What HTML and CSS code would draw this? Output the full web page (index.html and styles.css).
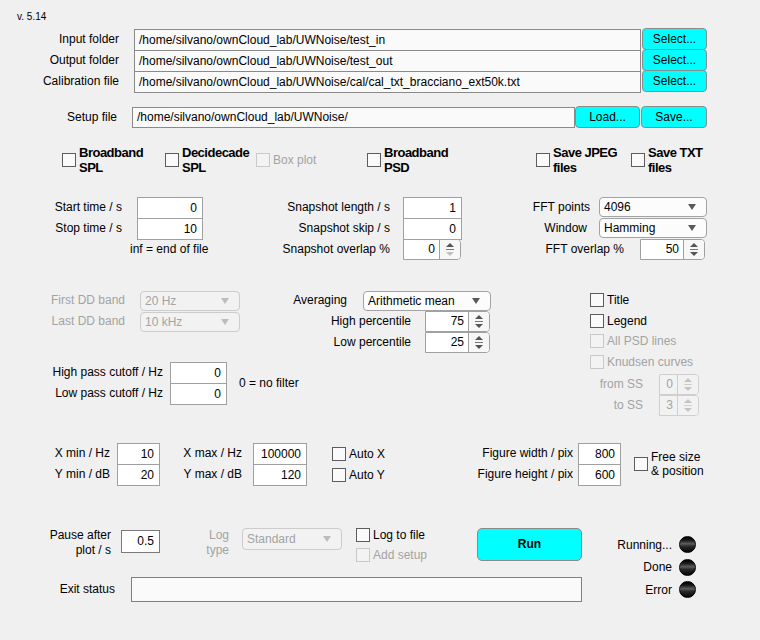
FILE: index.html
```html
<!DOCTYPE html>
<html>
<head>
<meta charset="utf-8">
<title>UWNoise</title>
<link rel="stylesheet" href="styles.css">
</head>
<body>
<div class="app">
  <div class="version">v. 5.14</div>

  <div class="paths">
    <div class="plabel">Input folder</div>
    <div class="path">/home/silvano/ownCloud_lab/UWNoise/test_in</div>
    <div class="bcell"><div class="btn">Select...</div></div>
    <div class="plabel">Output folder</div>
    <div class="path">/home/silvano/ownCloud_lab/UWNoise/test_out</div>
    <div class="bcell"><div class="btn">Select...</div></div>
    <div class="plabel">Calibration file</div>
    <div class="path">/home/silvano/ownCloud_lab/UWNoise/cal/cal_txt_bracciano_ext50k.txt</div>
    <div class="bcell"><div class="btn">Select...</div></div>
  </div>

  <div class="setup">
    <div class="slabel">Setup file</div>
    <div class="path spath">/home/silvano/ownCloud_lab/UWNoise/</div>
    <div class="btn load">Load...</div>
    <div class="btn save">Save...</div>
  </div>

  <div class="checks">
    <div class="chk c1"><span class="cb"></span><span class="blabel">Broadband<br>SPL</span></div>
    <div class="chk c2"><span class="cb"></span><span class="blabel">Decidecade<br>SPL</span></div>
    <div class="chk c3 dis"><span class="cb"></span><span>Box plot</span></div>
    <div class="chk c4"><span class="cb"></span><span class="blabel">Broadband<br>PSD</span></div>
    <div class="chk c5"><span class="cb"></span><span class="blabel">Save JPEG<br>files</span></div>
    <div class="chk c6"><span class="cb"></span><span class="blabel">Save TXT<br>files</span></div>
  </div>

  <div class="time">
    <div class="grp ta">
      <div class="row"><div class="lbl la">Start time / s</div><div class="num wa">0</div></div>
      <div class="row"><div class="lbl la">Stop time / s</div><div class="num wa">10</div></div>
      <div class="row"><div class="note inf">inf = end of file</div></div>
    </div>
    <div class="grp tb">
      <div class="row"><div class="lbl lb">Snapshot length / s</div><div class="num wb">1</div></div>
      <div class="row"><div class="lbl lb">Snapshot skip / s</div><div class="num wb">0</div></div>
      <div class="row"><div class="lbl lb">Snapshot overlap %</div>
        <div class="spin wbs"><span class="v">0</span><span class="ar"><i class="up"></i><i class="ln"></i><i class="dn off"></i></span></div>
      </div>
    </div>
    <div class="grp tc">
      <div class="row"><div class="lbl lc">FFT points</div><div class="dd wc"><span>4096</span></div></div>
      <div class="row"><div class="lbl lc lwin">Window</div><div class="dd wc"><span>Hamming</span></div></div>
      <div class="row"><div class="lbl lc3">FFT overlap %</div>
        <div class="spin wcs"><span class="v">50</span><span class="ar"><i class="up"></i><i class="ln"></i><i class="dn"></i></span></div>
      </div>
    </div>
  </div>

  <div class="mid">
    <div class="mleft">
      <div class="mtop">
        <div class="grp mda">
          <div class="row"><div class="lbl ldd dis">First DD band</div><div class="dd dis wdd"><span>20 Hz</span></div></div>
          <div class="row"><div class="lbl ldd dis">Last DD band</div><div class="dd dis wdd"><span>10 kHz</span></div></div>
        </div>
        <div class="grp mdb">
          <div class="row"><div class="lbl lavg">Averaging</div><div class="dd wavg"><span>Arithmetic mean</span></div></div>
          <div class="row"><div class="lbl lpct">High percentile</div>
            <div class="spin wpct"><span class="v">75</span><span class="ar"><i class="up"></i><i class="ln"></i><i class="dn"></i></span></div>
          </div>
          <div class="row"><div class="lbl lpct">Low percentile</div>
            <div class="spin wpct"><span class="v">25</span><span class="ar"><i class="up"></i><i class="ln"></i><i class="dn"></i></span></div>
          </div>
        </div>
      </div>
      <div class="hp">
        <div class="grp">
          <div class="row"><div class="lbl lhp">High pass cutoff / Hz</div><div class="num whp">0</div></div>
          <div class="row"><div class="lbl lhp">Low pass cutoff / Hz</div><div class="num whp">0</div></div>
        </div>
        <div class="note nf">0 = no filter</div>
      </div>
    </div>
    <div class="grp mc">
      <div class="crow"><span class="cb"></span><span>Title</span></div>
      <div class="crow"><span class="cb"></span><span>Legend</span></div>
      <div class="crow dis"><span class="cb"></span><span>All PSD lines</span></div>
      <div class="crow dis"><span class="cb"></span><span>Knudsen curves</span></div>
      <div class="ss">
        <div class="row"><div class="lbl lss dis">from SS</div>
          <div class="spin wss dis"><span class="v">0</span><span class="ar"><i class="up"></i><i class="ln"></i><i class="dn"></i></span></div>
        </div>
        <div class="row"><div class="lbl lss dis">to SS</div>
          <div class="spin wss dis"><span class="v">3</span><span class="ar"><i class="up"></i><i class="ln"></i><i class="dn"></i></span></div>
        </div>
      </div>
    </div>
  </div>

  <div class="axes">
    <div class="grp">
      <div class="row"><div class="lbl lxa">X min / Hz</div><div class="num wxa">10</div></div>
      <div class="row"><div class="lbl lxa">Y min / dB</div><div class="num wxa">20</div></div>
    </div>
    <div class="grp">
      <div class="row"><div class="lbl lxb">X max / Hz</div><div class="num wxb">100000</div></div>
      <div class="row"><div class="lbl lxb">Y max / dB</div><div class="num wxb">120</div></div>
    </div>
    <div class="grp auto">
      <div class="crow arow"><span class="cb"></span><span>Auto X</span></div>
      <div class="crow arow"><span class="cb"></span><span>Auto Y</span></div>
    </div>
    <div class="grp">
      <div class="row"><div class="lbl lfig">Figure width / pix</div><div class="num wfig">800</div></div>
      <div class="row"><div class="lbl lfig">Figure height / pix</div><div class="num wfig">600</div></div>
    </div>
    <div class="free"><span class="cb"></span><span class="two">Free size<br>&amp; position</span></div>
  </div>

  <div class="bottom">
    <div class="bleft">
      <div class="btop">
        <div class="lpause">Pause after<br>plot / s</div>
        <div class="num pause">0.5</div>
        <div class="llog dis">Log<br>type</div>
        <div class="dd dis wlog"><span>Standard</span></div>
        <div class="grp logc">
          <div class="crow lrow"><span class="cb"></span><span>Log to file</span></div>
          <div class="crow lrow dis"><span class="cb"></span><span>Add setup</span></div>
        </div>
        <div class="btn run">Run</div>
      </div>
      <div class="exit">
        <div class="lexit">Exit status</div>
        <div class="exitfield"></div>
      </div>
    </div>
    <div class="lamps">
      <div class="lrow2"><span class="llbl">Running...</span><span class="lamp"></span></div>
      <div class="lrow2"><span class="llbl">Done</span><span class="lamp"></span></div>
      <div class="lrow2"><span class="llbl">Error</span><span class="lamp"></span></div>
    </div>
  </div>
</div>
</body>
</html>
```

FILE: styles.css
```css
html, body {
  margin: 0;
  padding: 0;
  background: #f0f0f0;
}

.app {
  width: 760px;
  height: 640px;
  font-family: "Liberation Sans", Arial, sans-serif;
  font-size: 12px;
  color: #000;
  overflow: hidden;
}

.version {
  box-sizing: border-box;
  height: 29px;
  padding: 11px 0 0 17px;
  font-size: 10px;
  line-height: 12px;
}

/* path rows */
.paths {
  display: grid;
  grid-template-columns: 134px 507px 66px;
  grid-auto-rows: 21px;
}

.plabel {
  text-align: right;
  padding-right: 15px;
  line-height: 21px;
  white-space: nowrap;
}

.path {
  box-sizing: border-box;
  height: 22px;
  border: 1px solid #8a8a8a;
  background: #fafafa;
  padding-left: 4px;
  line-height: 20px;
  white-space: nowrap;
  overflow: hidden;
}

.bcell {
  padding-left: 1px;
}

.btn {
  box-sizing: border-box;
  height: 22px;
  margin-top: -1px;
  background: #00ffff;
  border: 1px solid #8c8c8c;
  border-radius: 4px;
  text-align: center;
  line-height: 20px;
}

.setup {
  display: flex;
  margin-top: 15px;
  height: 21px;
}

.slabel {
  box-sizing: border-box;
  width: 132px;
  padding-right: 15px;
  text-align: right;
  line-height: 21px;
}

.spath {
  width: 443px;
  height: 21px;
  line-height: 19px;
}

.load { width: 65px; }
.save { width: 66px; margin-left: 1px; }

/* checkbox row */
.checks {
  display: flex;
  align-items: center;
  height: 28px;
  margin-top: 18px;
  padding-left: 62px;
}

.chk {
  display: flex;
  align-items: center;
}

.c1 { width: 103px; }
.c2 { width: 91px; }
.c3 { width: 111px; }
.c4 { width: 169px; }
.c5 { width: 95px; }

.cb {
  box-sizing: border-box;
  flex: none;
  width: 14px;
  height: 14px;
  margin-right: 3px;
  border: 1px solid #5c5c5c;
  background: #fafafa;
}

.dis { color: #a3a3a3; }
.dis .cb { border-color: #c9c9c9; background: #f3f3f3; }

.blabel {
  font-family: "Liberation Sans", Arial, sans-serif;
  font-weight: bold;
  font-size: 13px;
  letter-spacing: -0.5px;
  line-height: 15px;
  white-space: nowrap;
}

/* generic groups */
.grp {
  display: flex;
  flex-direction: column;
}

.row {
  display: flex;
  align-items: flex-start;
  height: 21px;
}

.lbl {
  box-sizing: border-box;
  flex: none;
  text-align: right;
  line-height: 21px;
  white-space: nowrap;
}

.note {
  line-height: 21px;
  white-space: nowrap;
}

.num {
  box-sizing: border-box;
  flex: none;
  height: 22px;
  border: 1px solid #a0a0a0;
  background: #fff;
  text-align: right;
  padding-right: 5px;
  line-height: 20px;
}

/* dropdown */
.dd {
  box-sizing: border-box;
  flex: none;
  display: flex;
  align-items: center;
  height: 20px;
  padding-left: 4px;
  border: 1px solid #a3a3a3;
  border-radius: 4px;
  background: #fcfcfc;
}

.dd span {
  flex: 1;
  white-space: nowrap;
}

.dd::after {
  content: "";
  width: 0;
  height: 0;
  margin-right: 10px;
  border-left: 4px solid transparent;
  border-right: 4px solid transparent;
  border-top: 6px solid #5a5a5a;
}

.dd.dis {
  border-color: #cccccc;
  background: #f2f2f2;
}

.dd.dis::after {
  border-top-color: #bdbdbd;
}

/* spinner */
.spin {
  box-sizing: border-box;
  flex: none;
  display: flex;
  height: 21px;
  border: 1px solid #a0a0a0;
  border-radius: 0 4px 4px 0;
  background: #fff;
}

.spin .v {
  flex: 1;
  text-align: right;
  padding-right: 4px;
  line-height: 19px;
}

.spin .ar {
  width: 20px;
  border-left: 1px solid #a0a0a0;
  border-radius: 0 3px 3px 0;
  background: #f7f7f7;
  display: flex;
  flex-direction: column;
  align-items: center;
  justify-content: center;
  gap: 2px;
}

.ar i {
  display: block;
  width: 0;
  height: 0;
  border-left: 4px solid transparent;
  border-right: 4px solid transparent;
}

.ar .up { border-bottom: 4px solid #555; }
.ar .dn { border-top: 4px solid #555; }
.ar .ln {
  width: 8px;
  height: 1px;
  border: 0;
  background: #777;
}
.ar .dn.off { border-top-color: #c0c0c0; }

.spin.dis {
  border-color: #cfcfcf;
  background: #f2f2f2;
}
.spin.dis .ar { border-left-color: #cfcfcf; background: #f2f2f2; }
.spin.dis .up { border-bottom-color: #c4c4c4; }
.spin.dis .dn { border-top-color: #c4c4c4; }
.spin.dis .ln { background: #cfcfcf; }

/* time section */
.time {
  display: flex;
  margin-top: 23px;
}

.ta { width: 203px; }
.la { width: 137px; padding-right: 15px; }
.wa { width: 66px; }
.inf { padding-left: 130px; }

.tb { width: 259px; }
.lb { width: 200px; padding-right: 13px; }
.wb { width: 59px; }
.wbs { width: 58px; }

.lc { width: 137px; padding-right: 9px; }
.lwin { padding-right: 12px; }
.wc { width: 108px; }
.lc3 { width: 178px; padding-right: 16px; }
.wcs { width: 65px; }

/* middle section */
.mid {
  display: flex;
  margin-top: 30px;
}

.mleft { width: 491px; }

.mtop { display: flex; }

.mda { width: 240px; }
.ldd { width: 140px; padding-right: 15px; }
.wdd { width: 100px; margin-top: 1px; }

.mdb { width: 251px; }
.lavg { width: 123px; padding-right: 16px; }
.wavg { width: 128px; margin-top: 1px; }
.lpct { width: 185px; padding-right: 14px; }
.wpct { width: 65px; }

.hp {
  display: flex;
  align-items: center;
  margin-top: 9px;
}
.lhp { width: 170px; padding-right: 7px; }
.whp { width: 57px; }
.nf { margin-left: 12px; }

.mc { margin-left: 99px; }

.crow {
  display: flex;
  align-items: center;
  height: 20.5px;
  white-space: nowrap;
}

.ss { margin-top: 2px; }
.lss { width: 69px; padding-right: 16px; margin-left: 0; }
.wss { width: 40px; }

/* axes section */
.axes {
  display: flex;
  margin-top: 27px;
}

.lxa { width: 117px; padding-right: 7px; }
.wxa { width: 43px; }
.lxb { width: 93px; padding-right: 11px; }
.wxb { width: 54px; }
.auto { width: 100px; padding-left: 25px; box-sizing: border-box; }
.arow { height: 21px; }
.lfig { width: 171px; padding-right: 5px; }
.wfig { width: 43px; }

.free {
  display: flex;
  align-items: center;
  height: 42px;
  margin-left: 13px;
}

.two { line-height: 14px; }

/* bottom section */
.bottom {
  display: flex;
  margin-top: 43px;
}

.bleft { width: 582px; }

.btop {
  display: flex;
  align-items: flex-start;
  height: 33px;
}

.lpause {
  box-sizing: border-box;
  width: 121px;
  padding-right: 10px;
  text-align: right;
  line-height: 15px;
}

.pause {
  width: 39px;
  height: 23px;
  margin-top: 2px;
  border-color: #7a7a7a;
  line-height: 21px;
}

.llog {
  box-sizing: border-box;
  width: 82px;
  padding-right: 13px;
  text-align: right;
  line-height: 15px;
}

.wlog { width: 100px; height: 22px; }

.logc {
  width: 135px;
  box-sizing: border-box;
  padding-left: 14px;
  margin-top: -3.5px;
}
.lrow { height: 20px; }

.run {
  width: 105px;
  height: 33px;
  margin-top: 0;
  font-weight: bold;
  line-height: 31px;
  border-color: #8a8a8a;
  border-radius: 5px;
}

.exit {
  display: flex;
  margin-top: 16px;
}

.lexit {
  box-sizing: border-box;
  width: 131px;
  padding-right: 16px;
  text-align: right;
  line-height: 25px;
}

.exitfield {
  box-sizing: border-box;
  width: 451px;
  height: 25px;
  border: 1px solid #808080;
  background: #fafafa;
}

.lamps {
  margin-top: 5.5px;
}

.lrow2 {
  display: flex;
  align-items: center;
  height: 22.5px;
}

.llbl {
  width: 90px;
  text-align: right;
  white-space: nowrap;
}

.lamp {
  box-sizing: border-box;
  width: 17px;
  height: 17px;
  margin-left: 7px;
  border-radius: 50%;
  border: 1px solid #000;
  background: linear-gradient(to bottom, #000 0%, #1a1a1a 22%, #5e5e5e 45%, #2a2a2a 62%, #050505 100%);
}
```
